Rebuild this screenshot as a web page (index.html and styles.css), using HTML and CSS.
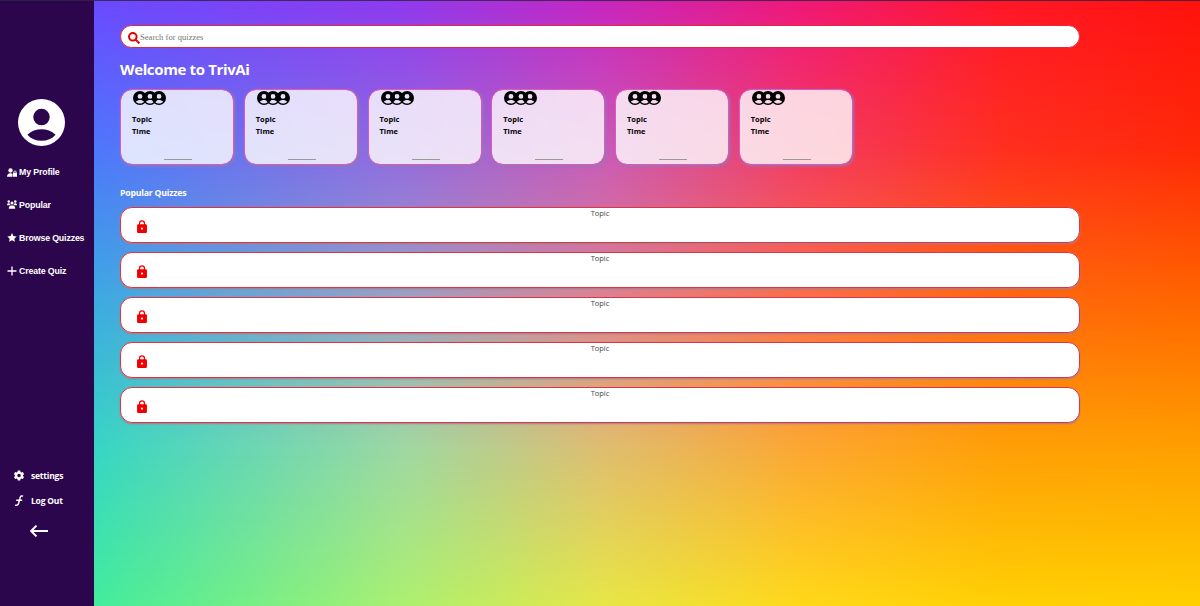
FILE: index.html
```
<!DOCTYPE html>
<html lang="en">
<head>
  <meta charset="UTF-8" />
  <meta name="viewport" content="width=device-width, initial-scale=1.0"/>
  <title>TrivAi</title>
  <link rel="stylesheet" href="styles.css">
</head>
<body>

  <!-- Shared icons -->
  <svg class="sprite" width="0" height="0">
    <symbol id="user" viewBox="0 0 20 20">
      <path fill-rule="evenodd" d="M10 0a10 10 0 1 0 0 20a10 10 0 0 0 0-20zM10 4.200a3.500 3.500 0 1 1 0 7a3.500 3.500 0 0 1 0-7zM4 15.200c1.700-1.600 3.800-2.300 6-2.300s4.300.7 6 2.300c-1.500 1.700-3.600 2.600-6 2.600s-4.500-.9-6-2.600z"/>
    </symbol>
    <symbol id="lock" viewBox="0 0 16 21">
      <path fill-rule="evenodd" d="M3 7V5.500a5 5 0 0 1 10 0V7h1a2 2 0 0 1 2 2v10a2 2 0 0 1-2 2H2a2 2 0 0 1-2-2V9a2 2 0 0 1 2-2zM5 7h6V5.500a3 3 0 0 0-6 0zM8 12.200a1.700 1.700 0 1 0 0 3.400a1.700 1.700 0 0 0 0-3.400z"/>
    </symbol>
  </svg>

  <div class="topline"></div>

  <div class="app">
    <aside class="sidebar">
      <svg class="avatar" viewBox="0 0 20 20"><use href="#user"/></svg>

      <nav class="menu">
        <a class="menu-item">
          <svg viewBox="0 0 20 17"><circle cx="7" cy="4.500" r="4.300"/><path d="M0 17c0-4.500 2.500-7 6-7h2c1.300 0 2.300.4 3 1v6z"/><path fill-rule="evenodd" d="M13 9V7.500a3 3 0 0 1 6 0V9h1v8h-8V9zM14.600 9h2.800V7.500a1.400 1.400 0 0 0-2.800 0z"/></svg>
          <span>My Profile</span>
        </a>
        <a class="menu-item">
          <svg viewBox="0 0 20 17"><circle cx="3.500" cy="2.500" r="2.500"/><circle cx="16.500" cy="2.500" r="2.500"/><circle cx="10" cy="5.500" r="3"/><path d="M0 10C0 7 1.500 6 3.500 6c1 0 1.700.3 2.200.8L7 10zM20 10c0-3-1.500-4-3.500-4-1 0-1.700.3-2.200.8L13 10zM3.500 17c0-4 2-6.300 5-6.300h3c3 0 5 2.300 5 6.300z"/></svg>
          <span>Popular</span>
        </a>
        <a class="menu-item">
          <svg viewBox="0 0 20 19"><path d="M10 0l3 6.200 6.800 1-4.900 4.700 1.200 6.800L10 15.500l-6.100 3.200 1.200-6.800L.2 7.200l6.800-1z"/></svg>
          <span>Browse Quizzes</span>
        </a>
        <a class="menu-item">
          <svg viewBox="0 0 20 20"><path d="M8.700 1h2.600v7.700H19v2.600h-7.700V19H8.700v-7.700H1V8.700h7.700z"/></svg>
          <span>Create Quiz</span>
        </a>
      </nav>

      <div class="bottom">
        <a class="bottom-item">
          <svg viewBox="1 0 18 20"><path fill-rule="evenodd" d="M7.800 1h4.400l.6 2.700 1.500.9 2.700-.9 2.200 3.800-2 1.900v1.400l2 1.900-2.200 3.800-2.700-.9-1.500.9-.6 2.500H7.800l-.6-2.500-1.500-.9-2.700.9-2.200-3.800 2-1.900V9.400l-2-1.900L3 3.700l2.700.9 1.500-.9zM10 6.900a3.200 3.200 0 1 0 0 6.400a3.200 3.200 0 0 0 0-6.400z"/></svg>
          <span>settings</span>
        </a>
        <a class="bottom-item">
          <svg class="line" viewBox="0 0 20 24"><path d="M19 2.500c-4-1.500-6 0-7 5L9.500 17c-1 4.500-3.500 6.500-8 5M4 11.500h13"/></svg>
          <span>Log Out</span>
        </a>
        <svg class="back" viewBox="0 0 18 12"><path d="M6.500 .6L1.200 6l5.300 5.400M1.200 6H18"/></svg>
      </div>
    </aside>

    <main class="content">
      <div class="bg bg1"></div>
      <div class="bg bg2"></div>
      <div class="bg bg3"></div>
      <div class="bg bg4"></div>

      <div class="inner">
        <div class="search">
          <svg viewBox="0 0 12 12"><circle cx="4.800" cy="4.800" r="3.800"/><path d="M7.600 7.600l3.800 3.800"/></svg>
          <span>Search for quizzes</span>
        </div>

        <h1>Welcome to TrivAi</h1>

        <div class="cards" id="cards"></div>

        <h2>Popular Quizzes</h2>

        <div class="rows" id="rows"></div>
      </div>
    </main>
  </div>

  <script>
    const cards = document.getElementById("cards");
    const rows = document.getElementById("rows");
    const user = '<svg viewBox="0 0 20 20"><use href="#user"/></svg>';

    for (let i = 0; i < 6; i++) {
      const card = document.createElement("div");
      card.className = "card";
      card.innerHTML = `<div class="players">${user.repeat(3)}</div><p>Topic</p><p>Time</p><hr>`;
      cards.appendChild(card);
    }

    for (let i = 0; i < 5; i++) {
      const row = document.createElement("div");
      row.className = "row";
      row.innerHTML = '<p>Topic</p><svg viewBox="0 0 16 21"><use href="#lock"/></svg>';
      rows.appendChild(row);
    }
  </script>
</body>
</html>
```
FILE: styles.css
```
* {
  box-sizing: border-box;
  margin: 0;
  padding: 0;
}

body {
  height: 100vh;
  overflow: hidden;
  font-family: "Open Sans", "Noto Sans", sans-serif;
  background: #2b064c;
}

.sprite {
  display: block;
}

.topline {
  position: absolute;
  top: 0;
  left: 0;
  width: 100%;
  height: 1px;
  background: rgba(50, 35, 70, 0.85);
  z-index: 5;
}

.app {
  display: flex;
  height: 100vh;
}

/* Sidebar */
.sidebar {
  width: 94px;
  flex: none;
  display: flex;
  flex-direction: column;
  padding: 99px 0 69px;
  color: white;
  fill: white;
  background: #2b064c;
}

.avatar {
  width: 47px;
  height: 47px;
  margin-left: 18px;
}

.menu {
  margin-top: 14px;
  padding-left: 7px;
  font-family: "Liberation Sans", Arial, sans-serif;
  font-size: 8.800px;
  font-weight: bold;
  letter-spacing: -0.15px;
}

.menu-item {
  display: flex;
  align-items: center;
  gap: 2px;
  height: 24px;
  margin-bottom: 8.900px;
  white-space: nowrap;
}

.menu-item svg {
  width: 10px;
  height: 9px;
}

.menu-item:nth-child(4) svg {
  height: 10px;
}

.bottom {
  margin-top: auto;
  padding-left: 14px;
  font-size: 8.500px;
  font-weight: bold;
  letter-spacing: -0.2px;
}

.bottom-item {
  display: flex;
  align-items: center;
  gap: 7px;
  height: 25px;
}

.bottom-item svg {
  width: 10px;
  height: 11px;
}

.line,
.back {
  fill: none;
  stroke: white;
  stroke-width: 3.200;
}

.back {
  display: block;
  width: 18px;
  height: 12px;
  margin: 12px 0 0 16px;
  stroke-width: 1.900;
}

/* Main area */
.content {
  position: relative;
  flex: 1;
  padding: 25px 0 0 26px;
  background: linear-gradient(90deg, #6a4aff 0%, #8f3aee 28%, #c726c0 46%, #f01878 64%, #ff1728 82%, #ff120c 100%);
}

/* Colour bands fade into each other from top to bottom */
.bg {
  position: absolute;
  inset: 0;
}

.bg1 {
  background: linear-gradient(90deg, #4d78fb 0%, #946adf 28%, #c95bb8 46%, #f33b62 64%, #ff3020 82%, #ff2a08 100%);
  mask-image: linear-gradient(transparent 0, black 150px);
}

.bg2 {
  background: linear-gradient(90deg, #3caae2 0%, #9ba2c4 28%, #dc8390 46%, #fa704a 64%, #ff6810 82%, #ff6600 100%);
  mask-image: linear-gradient(transparent 150px, black 300px);
}

.bg3 {
  background: linear-gradient(90deg, #37d6c4 0%, #9fd8a2 28%, #dfbe70 46%, #fca832 64%, #ffa008 82%, #ffa000 100%);
  mask-image: linear-gradient(transparent 300px, black 450px);
}

.bg4 {
  background: linear-gradient(90deg, #42ec9c 0%, #abf070 28%, #e6e647 46%, #ffd81a 64%, #ffd005 82%, #ffd000 100%);
  mask-image: linear-gradient(transparent 450px, black 606px);
}

.inner {
  position: relative;
  width: 960px;
}

.search {
  display: flex;
  align-items: center;
  height: 23px;
  padding-left: 7px;
  border: 1px solid #e5263c;
  border-radius: 12px;
  background: white;
  font-family: "Liberation Serif", serif;
  font-size: 8.600px;
  color: #777;
}

.search svg {
  width: 12px;
  height: 12px;
  margin-top: 2px;
  fill: none;
  stroke: #e50000;
  stroke-width: 2;
}

h1 {
  height: 41px;
  line-height: 43px;
  font-size: 15px;
  letter-spacing: -0.36px;
  color: white;
}

.cards {
  display: flex;
  gap: 9.750px;
}

.card {
  width: 114px;
  height: 76px;
  padding: 1px 11px 0;
  border: 1px solid #e055c4;
  border-radius: 12px;
  background: rgba(255, 255, 255, 0.8);
  background-clip: padding-box;
  box-shadow: 1px 1px 3px #8a7fb0;
  font-size: 7.500px;
  font-weight: bold;
  line-height: 12px;
}

.players {
  display: flex;
  height: 14px;
  padding-left: 1px;
  margin-bottom: 8px;
}

.players svg {
  width: 14px;
  height: 14px;
  margin-right: -4.500px;
}

.card hr {
  width: 28px;
  margin: 22px auto 0;
  border: 0;
  border-top: 1px solid #999;
  transform: translateX(1px);
}

h2 {
  height: 42px;
  padding-top: 16px;
  font-size: 8.700px;
  letter-spacing: -0.2px;
  line-height: 25px;
  color: white;
}

.row {
  height: 36px;
  margin-bottom: 9px;
  border: 1px solid #df3444;
  border-radius: 12px;
  background: white;
  box-shadow: 0 1px 2px #a08090;
  font-size: 7.500px;
  line-height: 11px;
  text-align: center;
  color: #444;
}

.row svg {
  display: block;
  width: 10px;
  height: 13px;
  margin: 1px 0 0 16px;
  fill: #f00000;
}
```
